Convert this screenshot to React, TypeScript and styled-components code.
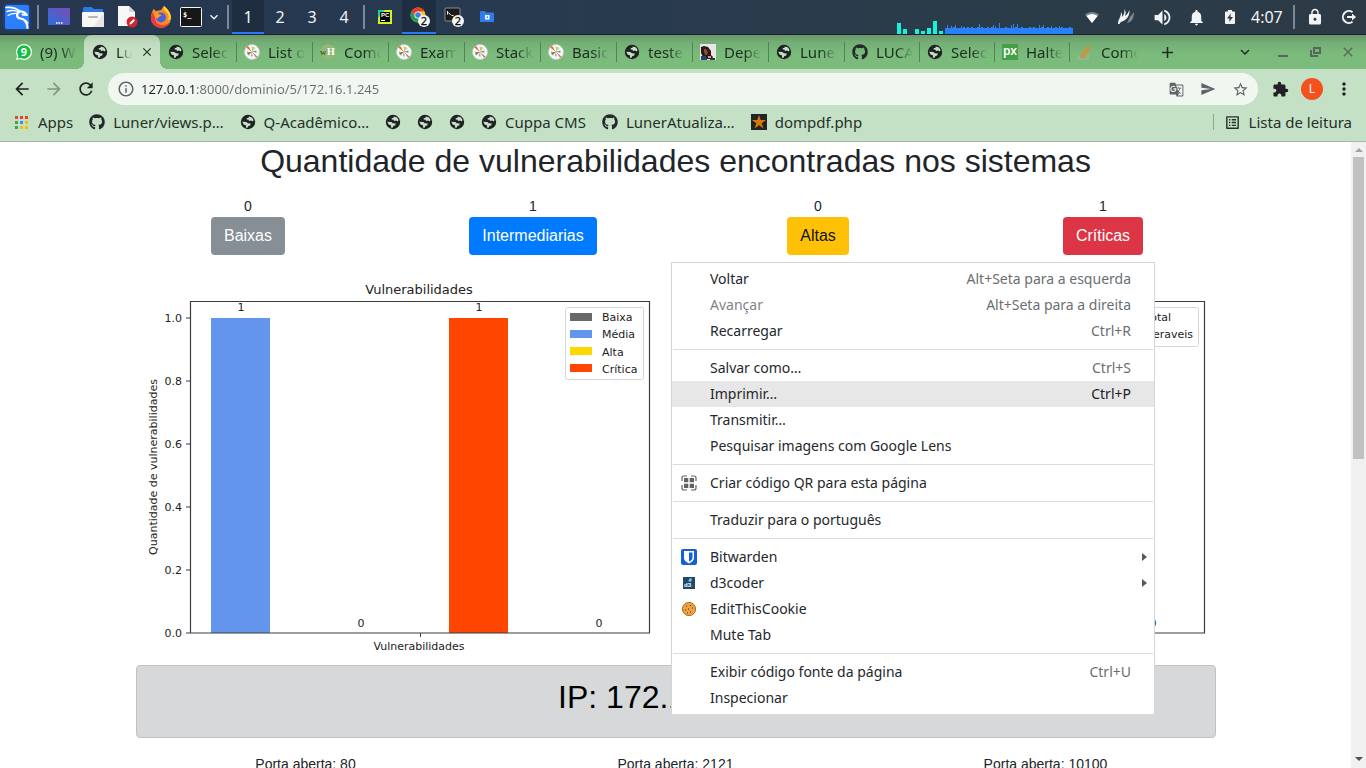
import React from "react";
import styled, { createGlobalStyle, css } from "styled-components";
import {
  MdArrowBack,
  MdArrowForward,
  MdRefresh,
  MdInfoOutline,
  MdGTranslate,
  MdSend,
  MdStarBorder,
  MdExtension,
  MdMoreVert,
  MdOutlineListAlt,
  MdVolumeUp,
  MdNotifications,
  MdLock,
  MdAdd,
  MdClose,
  MdExpandMore,
} from "react-icons/md";
import { FaGithub } from "react-icons/fa";

const ui = `"Noto Sans", sans-serif`;
const web = `"Liberation Sans", Arial, sans-serif`;

const GlobalStyle = createGlobalStyle`
  *, *::before, *::after { box-sizing: border-box; }
  body { margin: 0; overflow: hidden; background: #fff; color: #212529; }
  button, input { font: inherit; color: inherit; border: 0; padding: 0; margin: 0; background: none; }
  a { color: inherit; text-decoration: none; }
  ul { margin: 0; padding: 0; list-style: none; }
  svg { display: block; flex: none; }
`;

const Desktop = styled.div`
  display: flex;
  flex-direction: column;
  height: 100vh;
  overflow: hidden;
`;

/* ---------- desktop panel ---------- */

const Panel = styled.header`
  display: flex;
  align-items: stretch;
  flex: none;
  height: 35px;
  background: linear-gradient(90deg, #26374f 0%, #273a50 35%, #2a3c4a 65%, #2c3b46 100%);
  border-bottom: 1px solid #1b2130;
  color: #f3f4f5;
  font: 16px/34px ${ui};
`;

const PanelButton = styled.button<{ $w?: number; $active?: boolean }>`
  display: flex;
  align-items: center;
  justify-content: center;
  width: ${(p) => p.$w ?? 34}px;
  ${(p) =>
    p.$active &&
    css`
      background: #1f2d40;
      box-shadow: inset 0 -2px #2777ff;
    `}
`;

const PanelDivider = styled.span`
  width: 2px;
  margin: 5px 3px;
  background: #7d8894;
`;

const PanelSpacer = styled.span`
  flex: 1;
`;

const Clock = styled.time`
  width: 43px;
  padding-left: 4px;
`;

/* ---------- browser chrome ---------- */

const TabStrip = styled.nav`
  display: flex;
  align-items: stretch;
  flex: none;
  height: 34px;
  padding-left: 8px;
  background: linear-gradient(#68986a 0, #74af75 8px, #7aba7b 18px, #7bbc7c 100%);
  color: #202d24;
  font: 15px/34px ${ui};
`;

const Tab = styled.button<{ $active?: boolean; $divider?: boolean; $slim?: boolean }>`
  position: relative;
  display: flex;
  align-items: center;
  gap: 8px;
  width: ${(p) => (p.$slim ? 75 : 76)}px;
  padding: 0 0 0 8px;
  text-align: left;
  ${(p) =>
    p.$divider &&
    css`
      box-shadow: inset 1px 0 #4f8552;
      clip-path: inset(7px 0 7px 0);
    `}
  ${(p) =>
    p.$active &&
    css`
      background: linear-gradient(#adc5ad 0, #bdd8bd 6px, #c5e1c5 14px);
      border-radius: 8px 8px 0 0;
      &::before,
      &::after {
        content: "";
        position: absolute;
        bottom: 0;
        width: 8px;
        height: 8px;
      }
      &::before {
        right: 100%;
        background: radial-gradient(circle at 0 0, transparent 8px, #c5e1c5 8px);
      }
      &::after {
        left: 100%;
        background: radial-gradient(circle at 100% 0, transparent 8px, #c5e1c5 8px);
      }
    `}
`;

const TabTitle = styled.span<{ $short?: boolean }>`
  width: ${(p) => (p.$short ? 16 : 37)}px;
  overflow: hidden;
  white-space: nowrap;
  mask-image: linear-gradient(90deg, #000 ${(p) => (p.$short ? 20 : 55)}%, transparent);
`;

const StripButton = styled.button<{ $w: number }>`
  display: flex;
  align-items: center;
  justify-content: center;
  width: ${(p) => p.$w}px;
`;

const Toolbar = styled.div`
  display: flex;
  align-items: center;
  flex: none;
  height: 40px;
  padding: 0 6px;
  background: #c5e1c5;
  color: #202124;
`;

const ToolButton = styled.button<{ $dim?: boolean }>`
  display: flex;
  align-items: center;
  justify-content: center;
  width: 32px;
  height: 32px;
  opacity: ${(p) => (p.$dim ? 0.4 : 1)};
`;

const AddressBar = styled.form`
  display: flex;
  align-items: center;
  flex: 1;
  height: 32px;
  margin: 0 6px;
  padding: 0 2px 0 9px;
  border-radius: 16px;
  background: #f0f7f0;
  color: #5f6368;
`;

const AddressInput = styled.input`
  flex: 1;
  min-width: 0;
  margin-left: 6px;
  font: 13px/20px ${ui};
  color: transparent;
  background: linear-gradient(90deg, #202124 55px, #6a6f72 55px);
  background-clip: text;
  -webkit-background-clip: text;
`;

const Avatar = styled.span`
  width: 22px;
  height: 22px;
  border-radius: 50%;
  background: #f4511e;
  color: #fff;
  font: 12px/22px ${ui};
  text-align: center;
`;

const Bookmarks = styled.nav`
  display: flex;
  align-items: center;
  flex: none;
  gap: 16px;
  height: 33px;
  padding: 0 14px 6px;
  background: #c5e1c5;
  border-bottom: 1px solid #a3bba3;
  color: #26302a;
  font: 15px/26px ${ui};
`;

const Bookmark = styled.a`
  display: flex;
  align-items: center;
  gap: 8px;
  white-space: nowrap;
`;

const ReadingList = styled.button`
  display: flex;
  align-items: center;
  gap: 8px;
  height: 16px;
  margin-left: auto;
  padding-left: 10px;
  border-left: 1px solid #8ea68f;
`;

/* ---------- web page ---------- */

const Viewport = styled.div`
  position: relative;
  display: flex;
  flex: 1;
  min-height: 0;
`;

const Page = styled.main`
  flex: 1;
  min-width: 0;
  overflow: hidden;
  font: 14px/21px ${web};
  text-align: center;
`;

const Title = styled.h1`
  margin: 0 0 16px;
  font: 32px/38px ${web};
`;

const Row = styled.section<{ $max: number; $cols: number }>`
  display: grid;
  grid-template-columns: repeat(${(p) => p.$cols}, 1fr);
  max-width: ${(p) => p.$max}px;
  margin: 0 auto;
`;

const Severity = styled.div`
  display: flex;
  flex-direction: column;
  align-items: center;
`;

const SeverityButton = styled.button<{ $bg: string; $fg?: string }>`
  padding: 7px 13px;
  border-radius: 4px;
  background: ${(p) => p.$bg};
  color: ${(p) => p.$fg ?? "#fff"};
  font: 16px/24px ${web};
`;

const ChartSvg = styled.svg`
  width: 100%;
  height: auto;
  font: 11px "DejaVu Sans", sans-serif;
  fill: #222;
`;

const HostCard = styled.section`
  width: 80%;
  max-width: 1080px;
  height: 73px;
  margin: 0 auto 16px;
  padding: 12px 20px;
  border: 1px solid #c1c2c3;
  border-radius: 4px;
  background: #d6d8d9;
  color: #000;
`;

const HostName = styled.h2`
  margin: 0;
  font: 32px/38px ${web};
`;

const Scrollbar = styled.div`
  display: flex;
  flex-direction: column;
  flex: none;
  width: 15px;
  padding: 0 2px;
  background: #f1f1f1;
`;

const Thumb = styled.span`
  height: 302px;
  background: #c1c1c1;
`;

const ScrollArrow = styled.span<{ $down?: boolean }>`
  height: 15px;
  margin-top: ${(p) => (p.$down ? "auto" : "0")};
  padding: ${(p) => (p.$down ? 4 : 6)}px 2px;
  &::before {
    content: "";
    display: block;
    border: 4px solid transparent;
    border-width: ${(p) => (p.$down ? "4px 4px 0" : "0 4px 4px")};
    border-color: ${(p) => (p.$down ? "#505050 transparent" : "transparent transparent #a3a3a3")};
  }
`;

/* ---------- context menu ---------- */

const Menu = styled.ul`
  position: absolute;
  left: 671px;
  top: 120px;
  width: 484px;
  padding: 3px 0;
  background: #fff;
  border: 1px solid #d3d5d8;
  border-bottom: 0;
  font: 14px/26px ${ui};
  color: #25282c;
`;

const MenuItem = styled.button<{ $active?: boolean; $off?: boolean }>`
  display: flex;
  align-items: center;
  width: 100%;
  height: 26px;
  padding: 0 7px 0 9px;
  text-align: left;
  background: ${(p) => (p.$active ? "#e7e7e7" : "transparent")};
  color: ${(p) => (p.$off ? "#808488" : "inherit")};
`;

const MenuIcon = styled.span`
  display: flex;
  width: 29px;
`;

const MenuLabel = styled.span`
  flex: 1;
`;

const Shortcut = styled.kbd<{ $active?: boolean }>`
  padding-right: 16px;
  font: inherit;
  color: ${(p) => (p.$active ? "#202124" : "#6a6e73")};
`;

const MenuRule = styled.li`
  height: 11px;
  padding: 5px 1px;
  &::before {
    content: "";
    display: block;
    height: 1px;
    background: #dadce0;
  }
`;

/* ---------- drawings ---------- */

const Globe = () => (
  <svg width="16" height="16" viewBox="0 0 16 16">
    <circle cx="8" cy="8" r="7.2" fill="#202124" />
    <path
      d="M8.8 2.400 12 3.400 13.600 6 12.800 7.400 11.200 6.600 9 7 8.600 5.800 6.800 5.600 6.600 4.200 8.600 3.800zM2.300 7.800 6.400 8 7.800 9.200 10.800 9.400 10.200 11.400 8.400 12 7.600 13.800 5.800 13.400 6.200 11.600 3.600 10.600z"
      fill="#c5e1c5"
    />
  </svg>
);

const Github = () => <FaGithub size={16} color="#24292e" />;

const WhatsApp = () => (
  <svg width="16" height="16" viewBox="0 0 16 16">
    <path d="M8 0a8 8 0 0 1 0 16 8 8 0 0 1-3.800-1L0 16l1.100-4A8 8 0 0 1 8 0z" fill="#fff" />
    <path d="M8 1.200a6.800 6.800 0 1 1-3.600 12.600l-2.700.6.7-2.600A6.800 6.800 0 0 1 8 1.200z" fill="#12c03f" />
    <text x="8" y="12" textAnchor="middle" fontFamily="Noto Sans, sans-serif" fontWeight="700" fontSize="11" fill="#fff">9</text>
  </svg>
);

const Matplotlib = () => (
  <svg width="16" height="16" viewBox="0 0 16 16">
    <circle cx="8" cy="8" r="7.500" fill="#fff" stroke="#c3cdc3" />
    <g fill="none" stroke="#ccd5da" strokeWidth=".5">
      <circle cx="8" cy="8" r="4.600" />
      <path d="M8 1v14M1 8h14M13 3 3 13" />
    </g>
    <path d="M8 8 2.200 3.400 4 1.800z" fill="#ec6a35" />
    <path d="M8 8 13.400 12.400 12 13.800z" fill="#ec6a35" />
    <path d="M8 8 8.200 2.800l2.800.6z" fill="#c9c84e" />
    <path d="M8 8 3 8.200l1 3z" fill="#8a7a3e" />
    <path d="M8 8l4.200-1.600.2 2z" fill="#4e8fb0" />
    <path d="M8 8 6.600 12l2 .2z" fill="#7fb8c9" />
  </svg>
);

const WikiHow = () => (
  <svg width="16" height="16" viewBox="0 0 16 16">
    <circle cx="8" cy="8" r="7.600" fill="#93b874" />
    <text x="0" y="11" fontFamily="Liberation Serif, serif" fontWeight="700" fontSize="9" fill="#4a5a38">w</text>
    <text x="7" y="11" fontFamily="Liberation Serif, serif" fontWeight="700" fontSize="10" fill="#fff">H</text>
  </svg>
);

const Portrait = () => (
  <svg width="16" height="16" viewBox="0 0 16 16">
    <path fill="#e9e6e4" d="M0 0h16v16H0z" />
    <path fill="#2b1a18" d="M1 3 4 2l4 1 3 4v4l2 2-1 2H4L1 9z" />
    <path fill="#8c4a3c" d="M4 5h2l2 3-1 3H5L4 8z" />
    <path fill="#1f4470" d="M1 12h5l1 4H1z" />
    <path fill="#c9a58e" d="M8 12h3v2H8z" />
    <path fill="#3a3432" d="M10 14h5v2h-5z" />
  </svg>
);

const PixelSquare = () => (
  <svg width="16" height="16" viewBox="0 0 16 16">
    <path fill="#43a047" d="M0 0h16v16H0z" />
    <text x="8" y="11" textAnchor="middle" fontFamily="Noto Sans, sans-serif" fontWeight="600" fontSize="12" fill="#fff">px</text>
  </svg>
);

const StackOverflow = () => (
  <svg width="16" height="16" viewBox="0 0 16 16" fill="none" strokeWidth="1.200">
    <path d="M1.500 11v4h9.500v-4" stroke="#a9b5a9" />
    <path d="M3.300 13h5.600M3.500 10.900l5.600.6M4.200 8.300l5.400 1.700M5.800 5.600l4.600 3.200M8.200 3l3.200 4.600M11 1l1.200 5.600" stroke="#f48024" />
  </svg>
);

const StarTile = () => (
  <svg width="16" height="16" viewBox="0 0 16 16">
    <path fill="#222426" d="M0 0h16v16H0z" />
    <path fill="#d97706" d="m8 1 1.700 5H15l-4.300 3.200L12.400 14.500 8 11.300 3.600 14.500 5.300 9.200 1 6h5.300z" />
  </svg>
);

const AppsGrid = () => {
  const colors = ["#ea4335", "#ea4335", "#ea4335", "#34a853", "#4285f4", "#fbbc04", "#34a853", "#fbbc04", "#fbbc04"];
  return (
    <svg width="16" height="16" viewBox="0 0 16 16">
      {colors.map((c, i) => (
        <rect key={i} x={1 + (i % 3) * 5} y={2 + Math.floor(i / 3) * 5} width="3" height="3" fill={c} />
      ))}
    </svg>
  );
};

const Dragon = () => (
  <svg width="30" height="30" viewBox="0 0 30 30">
    <rect x="1" y="1" width="28" height="28" rx="5" fill="#1c4c9c" opacity=".45" />
    <rect x="3" y="3" width="24" height="24" rx="2" fill="#2a80ff" />
    <g fill="none" stroke="#fff" strokeLinecap="round" strokeLinejoin="round">
      <path d="M4 5.500c5-.5 10 .5 14.500 4" strokeWidth="1.600" />
      <path d="M5 9.500c4-1.500 8-1.500 12 .5" strokeWidth="1.500" />
      <path d="M6 13.500c3-2 6-2.500 9.500-2" strokeWidth="1.200" />
      <path d="M17 10c-3 2-2.500 6 1.500 6.500 4.500.5 6.500 4 7 9.500" strokeWidth="2.200" />
      <path d="M18 9.500c3-.5 5 .5 7 3.500l-4.500-.5" strokeWidth="2" />
      <path d="M21 17c2 .5 3.500 1.500 5 4" strokeWidth="1.200" />
    </g>
  </svg>
);

const ShowDesktop = () => (
  <svg width="22" height="18" viewBox="0 0 22 18">
    <defs>
      <linearGradient id="desk" x1="0" y1="1" x2="1" y2="0">
        <stop offset="0" stopColor="#2f6fdd" />
        <stop offset="1" stopColor="#7a4cb4" />
      </linearGradient>
    </defs>
    <rect width="22" height="17" rx="1" fill="url(#desk)" />
    <path d="M8 15h1.500M10.500 15H12M13 15h1.500" stroke="#fff" strokeWidth="1.500" />
  </svg>
);

const FileManager = () => (
  <svg width="22" height="20" viewBox="0 0 22 20">
    <path fill="#2f78e8" d="M1 1.500Q1 0 2.500 0h7L12 2h8q1 0 1 1v5H1z" />
    <rect y="5" width="22" height="15" rx="1" fill="#f6f6f5" />
    <path d="M22 6v14H11z" fill="#e6e6e5" />
    <rect x="6" y="9" width="10" height="2" rx="1" fill="#b5b5b5" />
  </svg>
);

const TextEditor = () => (
  <svg width="22" height="22" viewBox="0 0 22 22">
    <path d="M2 0h11l6 6v14H2z" fill="#f8f8f8" />
    <path d="M13 0v6h6z" fill="#d5d5d5" />
    <circle cx="16" cy="16" r="5.500" fill="#d9232e" />
    <path d="m13.500 18.500.5-2 3.500-3.500 1.500 1.500-3.500 3.500z" fill="#fff" />
  </svg>
);

const Firefox = () => (
  <svg width="22" height="22" viewBox="0 0 22 22">
    <path d="M14 0c3 2.500 7 6 7 12a10 10 0 0 1-20 0c0-4 1-6 2.500-9L6 5l5-1z" fill="#ff8a1e" />
    <path d="M14 0c-1 3 0 4 3 6.500 2 2 2 5 1 8l3-2C21 6.500 17 2.500 14 0z" fill="#ffd53d" />
    <path d="M1 11a10 10 0 0 0 19 5c-3 3-7 4-10 3s-5-4-5-8L2.500 6z" fill="#f0344c" />
    <circle cx="11" cy="11.500" r="5" fill="#4b62d9" />
    <path d="M4 8c2-1.500 4-1 5 .2l2.500.8c-.5 1.500-3.500 1.500-3.500 3.500-2 0-4-2-4-4.500z" fill="#ff9b26" />
  </svg>
);

const Terminal = () => (
  <svg width="22" height="20" viewBox="0 0 22 20">
    <rect x=".5" y=".5" width="21" height="19" rx="1" fill="#171717" stroke="#f3f3f3" />
    <text x="3" y="10" fontFamily="DejaVu Sans Mono, monospace" fontWeight="700" fontSize="7" fill="#fff">$_</text>
  </svg>
);

const PyCharm = () => (
  <svg width="14" height="14" viewBox="0 0 14 14">
    <rect width="14" height="14" fill="#d8f01e" />
    <path d="M0 0h7L0 8z" fill="#21d789" />
    <rect x="2" y="2" width="10" height="10" fill="#050505" />
    <text x="3" y="7" fontFamily="Liberation Sans, sans-serif" fontWeight="700" fontSize="6" fill="#fff">PC</text>
    <path d="M3 10.500h4" stroke="#fff" />
  </svg>
);

const CountBadge = () => (
  <>
    <circle cx="15" cy="14" r="6" fill="#f4f4f4" />
    <text x="15" y="18" textAnchor="middle" fontFamily="Noto Sans, sans-serif" fontSize="11" fill="#111" stroke="#111" strokeWidth=".3">2</text>
  </>
);

const ChromeRunning = () => (
  <svg width="22" height="22" viewBox="-1 -1 22 22">
    <circle cx="9" cy="8" r="7.500" fill="#f9c61c" />
    <path d="M2.500 4.250A7.500 7.500 0 0 1 15.500 4.250L9 4.500 5.500 9.500z" fill="#e33b2e" />
    <path d="M2.500 4.250A7.500 7.500 0 0 0 8.500 15.500L12 9.500 6 10z" fill="#1f9d55" />
    <circle cx="9" cy="8" r="3.600" fill="#fff" />
    <circle cx="9" cy="8" r="2.800" fill="#3f7fe8" />
    <CountBadge />
  </svg>
);

const TerminalRunning = () => (
  <svg width="22" height="22" viewBox="-1 -1 22 22">
    <rect x="2" y="1" width="15" height="13" rx="1" fill="#1a1a1a" stroke="#8a8f95" />
    <path d="M4.500 4v3.500M5.500 5.500 7.500 8M8.500 8.500h2" stroke="#fff" fill="none" />
    <CountBadge />
  </svg>
);

const FolderRunning = () => (
  <svg width="14" height="12" viewBox="0 0 14 12">
    <path d="M0 1q0-1 1-1h4l1.500 1.500H13q1 0 1 1V11H0z" fill="#2f7bf0" />
    <rect x="5" y="4" width="4.500" height="4.500" fill="#fff" />
    <rect x="6.500" y="5.500" width="1.500" height="1.500" fill="#2f7bf0" />
  </svg>
);

const loads = [6, 9, 6, 8, 7, 9, 6, 6, 8, 7, 6, 7, 6, 7, 6, 6, 7, 10, 7, 6, 6, 7, 6, 7, 9, 8, 6, 11, 6, 6, 7, 6, 6, 9, 10, 7, 10, 6, 7, 6, 6, 6, 7, 6, 7, 6, 6, 9, 7, 9, 6, 7, 6, 8, 6, 7, 6, 8, 7, 6, 6, 6, 7, 6];

const LoadGraph = () => (
  <svg width="180" height="34" viewBox="0 0 180 34">
    {[[0, 11], [6, 5], [18, 5], [24, 3], [30, 6], [36, 13], [42, 3]].map(([x, h]) => (
      <rect key={x} x={x} y={34 - h} width="4" height={h} fill="#12f4e0" />
    ))}
    {loads.map((h, i) => (
      <rect key={i} x={48 + i * 2} y={34 - h} width={h > 7 ? 1 : 2} height={h} fill="#2a86f8" />
    ))}
    <path d="M48 28h128v6H48z" fill="#2a80f8" />
  </svg>
);

const Wifi = () => (
  <svg width="16" height="16" viewBox="0 0 16 16">
    <path d="M8 14 1 5.500C5 2 11 2 15 5.500z" fill="#7b858d" />
    <path d="M8 14 2.500 7C5.500 4.500 10.500 4.500 13.500 7z" fill="#fff" />
  </svg>
);

const Feathers = () => (
  <svg width="18" height="18" viewBox="0 0 18 18">
    <path d="M10 15c5-1 7-5 7-11-2 3-4 4-5 7z" fill="#7d8890" />
    <path d="M1 16c0-5 3-6 3-12 1 2 1.500 3 1 5 2-2 2.500-4 2.500-8 1.500 3 1.500 4 .5 7 2-1 3-3 4.500-6 0 6-2 8-4.500 10-2 1.500-4 1-5.500 4z" fill="#f5f5f5" />
  </svg>
);

const Battery = () => (
  <svg width="10" height="14" viewBox="0 0 10 14">
    <path d="M3 0h4v1.500h2q1 0 1 1V13q0 1-1 1H1q-1 0-1-1V2.500q0-1 1-1h2z" fill="#f3f3f3" />
    <path d="M5.800 3.500 2 8.500h2.500L4.200 12 8 7H5.500z" fill="#2b3b47" />
  </svg>
);

const Logout = () => (
  <svg width="16" height="16" viewBox="0 0 16 16" fill="none" stroke="#f3f3f3" strokeWidth="2">
    <path d="M11.500 3.200A6 6 0 1 0 11.500 12.800" />
    <path d="M6 8h7" />
    <path d="m11 4.500 4 3.500-4 3.500z" fill="#f3f3f3" stroke="none" />
  </svg>
);

const Restore = () => (
  <svg width="12" height="12" viewBox="0 0 12 12" fill="none" stroke="#57685a" strokeWidth="2">
    <path d="M4 2h6v5H4z" />
    <path d="M1 4v6h7" />
  </svg>
);

const QrIcon = () => (
  <svg width="16" height="16" viewBox="0 0 16 16">
    <path
      d="M1 6V3Q1 1 3 1h3M10 1h3q2 0 2 2v3M15 10v3q0 2-2 2h-3M6 15H3q-2 0-2-2v-3"
      fill="none"
      stroke="#5f6368"
      strokeWidth="1.200"
    />
    <path d="M3 3h4.300v4.300H3zM8.700 3H13v4.300H8.700zM3 8.700h4.300V13H3zM8.700 8.700H13V13H8.700z" fill="#5f6368" />
  </svg>
);

const Bitwarden = () => (
  <svg width="16" height="16" viewBox="0 0 16 16">
    <rect width="16" height="16" rx="2" fill="#175ddc" />
    <path d="M3 2h10v7q0 3-5 5.500Q3 12 3 9z" fill="#fff" />
    <path d="M8 3.500h3.500V9q0 2-3.500 3.800z" fill="#175ddc" />
  </svg>
);

const D3coder = () => (
  <svg width="16" height="16" viewBox="0 0 16 16">
    <path fill="#1b4a6e" d="M2 2h12v12H2z" />
    <path fill="#8ac0e4" d="m7 6 2-3 2 1-1 3z" />
    <path fill="#6b4a3a" d="m10 7 3 5h-2z" />
    <text x="3" y="12" fontFamily="Liberation Sans, sans-serif" fontWeight="700" fontSize="6" fill="#fff">d3</text>
  </svg>
);

const Cookie = () => (
  <svg width="16" height="16" viewBox="0 0 16 16">
    <circle cx="8" cy="8" r="6.600" fill="#eba544" stroke="#b36b1c" />
    <path d="M5 5h1M9 4.500h1M11 7h1M7 8h1M4 9h1M9 11h1M6 12h1" stroke="#3c230c" />
  </svg>
);

const SubmenuArrow = () => (
  <svg width="5" height="8" viewBox="0 0 5 8">
    <path d="M0 0 5 4 0 8z" fill="#55585c" />
  </svg>
);

/* ---------- charts ---------- */

type Key = { color: string; label: string };

const ticks = ["0.0", "0.2", "0.4", "0.6", "0.8", "1.0"];

const Frame = ({ title, children }: { title: string; children: React.ReactNode }) => (
  <ChartSvg viewBox="1 0 555 410" role="img" aria-label={title}>
    <text x="299" y="39" textAnchor="middle" fontSize="13">{title}</text>
    {children}
    <path d="M70.500 46.500h459v331.500h-459z" fill="none" stroke="#3c3c3c" strokeWidth="1.200" />
    {ticks.map((t, i) => (
      <g key={t}>
        <path d={`M66 ${378 - i * 63}h4`} stroke="#3c3c3c" />
        <text x="62" y={382 - i * 63} textAnchor="end">{t}</text>
      </g>
    ))}
    <path d="M300.500 378v4" stroke="#3c3c3c" />
    <text x="299" y="395" textAnchor="middle">{title}</text>
    <text transform="translate(37 212) rotate(-90)" textAnchor="middle">Quantidade de vulnerabilidades</text>
  </ChartSvg>
);

const Bar = ({ x, value, color }: { x: number; value: number; color: string }) => (
  <g>
    <rect x={x} y={378 - value * 315} width="59" height={value * 315} fill={color} />
    <text x={x + 30} y={372 - value * 316} textAnchor="middle">{value}</text>
  </g>
);

const severityKeys: Key[] = [
  { color: "#696969", label: "Baixa" },
  { color: "#6495ed", label: "Média" },
  { color: "#ffd700", label: "Alta" },
  { color: "#ff4500", label: "Crítica" },
];

const SeverityChart = () => (
  <Frame title="Vulnerabilidades">
    <Bar x={91} value={1} color="#6495ed" />
    <Bar x={211} value={0} color="#ffd700" />
    <Bar x={329} value={1} color="#ff4500" />
    <Bar x={449} value={0} color="#696969" />
    <rect x="445.500" y="52.500" width="78" height="72" rx="2" fill="#fff" stroke="#d6d6d6" />
    {severityKeys.map((k, i) => (
      <g key={k.label}>
        <rect x="450" y={58 + i * 17} width="22" height="8" fill={k.color} />
        <text x="482" y={66 + i * 17.3}>{k.label}</text>
      </g>
    ))}
  </Frame>
);

const HostsChart = () => (
  <Frame title="Hosts">
    <Bar x={91} value={1} color="#6495ed" />
    <Bar x={448} value={0} color="#ff4500" />
    <rect x="412.500" y="52.500" width="111" height="39" rx="2" fill="#fff" stroke="#d6d6d6" />
    <rect x="417" y="58" width="22" height="8" fill="#6495ed" />
    <rect x="417" y="75" width="22" height="8" fill="#ff4500" />
    <text x="496" y="66" textAnchor="end">Total</text>
    <text x="518" y="83" textAnchor="end">Vulneraveis</text>
  </Frame>
);

/* ---------- data ---------- */

const tabs: { icon: React.ReactNode; title: string; active?: boolean; divider?: boolean; slim?: boolean }[] = [
  { icon: <WhatsApp />, title: "(9) WhatsApp" },
  { icon: <Globe />, title: "Luner", active: true },
  { icon: <Globe />, title: "Select" },
  { icon: <Matplotlib />, title: "List of", divider: true },
  { icon: <WikiHow />, title: "Como", divider: true },
  { icon: <Matplotlib />, title: "Examples", divider: true },
  { icon: <Matplotlib />, title: "Stacked", divider: true },
  { icon: <Matplotlib />, title: "Basic", divider: true },
  { icon: <Globe />, title: "teste.p", divider: true },
  { icon: <Portrait />, title: "Depen", divider: true },
  { icon: <Globe />, title: "Luner", divider: true },
  { icon: <Github />, title: "LUCAS", divider: true, slim: true },
  { icon: <Globe />, title: "Select", divider: true, slim: true },
  { icon: <PixelSquare />, title: "Halter", divider: true, slim: true },
  { icon: <StackOverflow />, title: "Como", divider: true, slim: true },
];

const bookmarks: { icon: React.ReactNode; label?: string }[] = [
  { icon: <AppsGrid />, label: "Apps" },
  { icon: <Github />, label: "Luner/views.p…" },
  { icon: <Globe />, label: "Q-Acadêmico…" },
  { icon: <Globe /> },
  { icon: <Globe /> },
  { icon: <Globe /> },
  { icon: <Globe />, label: "Cuppa CMS" },
  { icon: <Github />, label: "LunerAtualiza…" },
  { icon: <StarTile />, label: "dompdf.php" },
];

const severities = [
  { count: 0, label: "Baixas", bg: "#868e96" },
  { count: 1, label: "Intermediarias", bg: "#007bff" },
  { count: 0, label: "Altas", bg: "#ffc107", fg: "#111" },
  { count: 1, label: "Críticas", bg: "#dc3545" },
];

type Entry = {
  label: string;
  keys?: string;
  icon?: React.ReactNode;
  off?: boolean;
  active?: boolean;
  sub?: boolean;
};

const menu: (Entry | null)[] = [
  { label: "Voltar", keys: "Alt+Seta para a esquerda" },
  { label: "Avançar", keys: "Alt+Seta para a direita", off: true },
  { label: "Recarregar", keys: "Ctrl+R" },
  null,
  { label: "Salvar como…", keys: "Ctrl+S" },
  { label: "Imprimir…", keys: "Ctrl+P", active: true },
  { label: "Transmitir…" },
  { label: "Pesquisar imagens com Google Lens" },
  null,
  { label: "Criar código QR para esta página", icon: <QrIcon /> },
  null,
  { label: "Traduzir para o português" },
  null,
  { label: "Bitwarden", icon: <Bitwarden />, sub: true },
  { label: "d3coder", icon: <D3coder />, sub: true },
  { label: "EditThisCookie", icon: <Cookie /> },
  { label: "Mute Tab" },
  null,
  { label: "Exibir código fonte da página", keys: "Ctrl+U" },
  { label: "Inspecionar" },
];

export default function App() {
  return (
    <Desktop>
      <GlobalStyle />
      <Panel>
        <PanelButton aria-label="Menu"><Dragon /></PanelButton>
        <PanelDivider />
        <PanelButton aria-label="Área de trabalho"><ShowDesktop /></PanelButton>
        <PanelButton aria-label="Arquivos"><FileManager /></PanelButton>
        <PanelButton aria-label="Editor"><TextEditor /></PanelButton>
        <PanelButton aria-label="Firefox"><Firefox /></PanelButton>
        <PanelButton $w={26} aria-label="Terminal"><Terminal /></PanelButton>
        <PanelButton $w={20} aria-label="Mais"><MdExpandMore size={16} /></PanelButton>
        <PanelDivider />
        {[1, 2, 3, 4].map((n) => (
          <PanelButton key={n} $w={32} $active={n === 1}>{n}</PanelButton>
        ))}
        <PanelDivider />
        <PanelButton aria-label="PyCharm"><PyCharm /></PanelButton>
        <PanelButton $active aria-label="Chrome"><ChromeRunning /></PanelButton>
        <PanelButton aria-label="Terminais"><TerminalRunning /></PanelButton>
        <PanelButton aria-label="Pasta"><FolderRunning /></PanelButton>
        <PanelSpacer />
        <LoadGraph />
        <PanelButton $w={30} aria-label="Rede"><Wifi /></PanelButton>
        <PanelButton $w={38} aria-label="Notas"><Feathers /></PanelButton>
        <PanelButton aria-label="Volume"><MdVolumeUp size={21} /></PanelButton>
        <PanelButton aria-label="Notificações"><MdNotifications size={19} /></PanelButton>
        <PanelButton aria-label="Bateria"><Battery /></PanelButton>
        <Clock>4:07</Clock>
        <PanelDivider />
        <PanelButton aria-label="Bloquear"><MdLock size={18} /></PanelButton>
        <PanelButton aria-label="Sair"><Logout /></PanelButton>
      </Panel>

      <TabStrip>
        {tabs.map((t, i) => (
          <Tab key={i} $active={t.active} $divider={t.divider} $slim={t.slim}>
            {t.icon}
            <TabTitle $short={t.active}>{t.title}</TabTitle>
            {t.active && <MdClose size={14} />}
          </Tab>
        ))}
        <StripButton $w={46} aria-label="Nova guia"><MdAdd size={19} /></StripButton>
        <PanelSpacer />
        <StripButton $w={38} aria-label="Pesquisar guias"><MdExpandMore size={18} /></StripButton>
        <StripButton $w={38} aria-label="Minimizar">
          <svg width="10" height="12"><path d="M0 9h10v2H0z" fill="#57685a" /></svg>
        </StripButton>
        <StripButton $w={28} aria-label="Restaurar"><Restore /></StripButton>
        <StripButton $w={36} aria-label="Fechar"><MdClose size={16} color="#57685a" /></StripButton>
      </TabStrip>

      <Toolbar>
        <ToolButton aria-label="Voltar"><MdArrowBack size={20} /></ToolButton>
        <ToolButton $dim aria-label="Avançar"><MdArrowForward size={20} /></ToolButton>
        <ToolButton aria-label="Recarregar"><MdRefresh size={20} /></ToolButton>
        <AddressBar onSubmit={(e) => e.preventDefault()}>
          <MdInfoOutline size={18} />
          <AddressInput aria-label="Endereço" defaultValue="127.0.0.1:8000/dominio/5/172.16.1.245" />
          <ToolButton type="button" aria-label="Traduzir"><MdGTranslate size={15} /></ToolButton>
          <ToolButton type="button" aria-label="Enviar"><MdSend size={16} /></ToolButton>
          <ToolButton type="button" aria-label="Favorito"><MdStarBorder size={17} /></ToolButton>
        </AddressBar>
        <ToolButton aria-label="Extensões"><MdExtension size={17} /></ToolButton>
        <ToolButton aria-label="Perfil"><Avatar>L</Avatar></ToolButton>
        <ToolButton aria-label="Opções"><MdMoreVert size={20} /></ToolButton>
      </Toolbar>

      <Bookmarks>
        {bookmarks.map((b, i) => (
          <Bookmark key={i} href="#" aria-label={b.label ?? "Favorito"}>
            {b.icon}
            {b.label}
          </Bookmark>
        ))}
        <ReadingList>
          <MdOutlineListAlt size={17} />
          Lista de leitura
        </ReadingList>
      </Bookmarks>

      <Viewport>
        <Page>
          <Title>Quantidade de vulnerabilidades encontradas nos sistemas</Title>
          <Row $max={1140} $cols={4}>
            {severities.map((s) => (
              <Severity key={s.label}>
                {s.count}
                <SeverityButton $bg={s.bg} $fg={s.fg}>{s.label}</SeverityButton>
              </Severity>
            ))}
          </Row>
          <Row $max={1110} $cols={2}>
            <SeverityChart />
            <HostsChart />
          </Row>
          <HostCard>
            <HostName>IP: 172.16.1.245</HostName>
          </HostCard>
          <Row $max={1110} $cols={3}>
            <span>Porta aberta: 80</span>
            <span>Porta aberta: 2121</span>
            <span>Porta aberta: 10100</span>
          </Row>
        </Page>
        <Scrollbar>
          <ScrollArrow />
          <Thumb />
          <ScrollArrow $down />
        </Scrollbar>
        <Menu role="menu">
          {menu.map((m, i) =>
            m ? (
              <li key={i} role="none">
                <MenuItem role="menuitem" $active={m.active} $off={m.off} disabled={m.off}>
                  <MenuIcon>{m.icon}</MenuIcon>
                  <MenuLabel>{m.label}</MenuLabel>
                  {m.keys && <Shortcut $active={m.active}>{m.keys}</Shortcut>}
                  {m.sub && <SubmenuArrow />}
                </MenuItem>
              </li>
            ) : (
              <MenuRule key={i} role="separator" />
            )
          )}
        </Menu>
      </Viewport>
    </Desktop>
  );
}
